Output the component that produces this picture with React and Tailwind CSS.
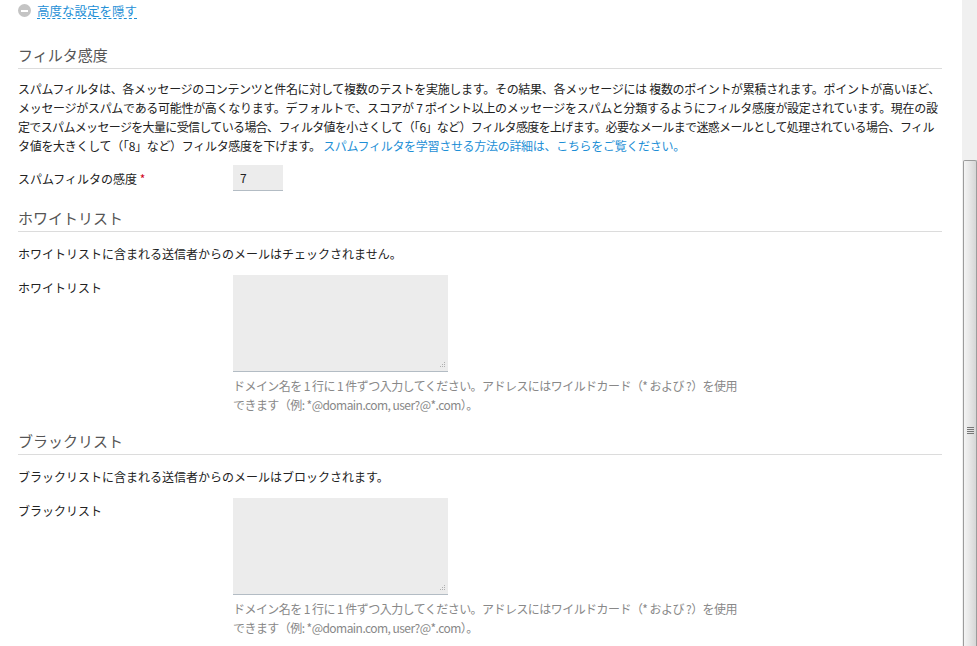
import React from "react";

const font = "font-['Meiryo','Noto_Sans_CJK_JP',sans-serif]";

function SectionHeading({ children, className = "" }) {
  return (
    <h3
      className={`text-[15px] leading-[20px] text-[#555] pb-[3px] border-b border-[#dcdcdc] ${className}`}
    >
      {children}
    </h3>
  );
}

function ListField({ label }) {
  return (
    <>
      <div className="mt-[12px] flex">
        <label className="w-[215px] shrink-0 pt-[3px] text-[12px] leading-[19px] text-[#222]">
          {label}
        </label>
        <div>
          <div className="relative w-[215px] h-[97px]">
            <textarea
              readOnly
              className="block w-full h-full resize-none bg-[#ececec] border-0 border-b border-[#b3bcc4] outline-none"
            />
            <svg
              className="absolute right-[2px] bottom-[3px]"
              width="7"
              height="7"
              viewBox="0 0 7 7"
            >
              <rect x="5" y="0" width="1" height="1" fill="#b0b0b0" />
              <rect x="3" y="2" width="1" height="1" fill="#b0b0b0" />
              <rect x="5" y="2" width="1" height="1" fill="#b0b0b0" />
              <rect x="1" y="4" width="1" height="1" fill="#b0b0b0" />
              <rect x="3" y="4" width="1" height="1" fill="#b0b0b0" />
              <rect x="5" y="4" width="1" height="1" fill="#b0b0b0" />
            </svg>
          </div>
          <p className="mt-[4px] text-[12px] leading-[19px] tracking-[-0.55px] text-[#888] whitespace-nowrap">
            ドメイン名を 1 行に 1 件ずつ入力してください。アドレスにはワイルドカード（* および ?）を使用
            <br />
            できます（例: *@domain.com, user?@*.com）。
          </p>
        </div>
      </div>
    </>
  );
}

function Scrollbar() {
  return (
    <div className="w-[15px] shrink-0 flex flex-col bg-[#f0f0f0]">
      <div className="h-[160px]" />
      <div className="flex-1 ml-px border border-b-0 border-[#9c9c9c] rounded-t-[2px] bg-gradient-to-r from-[#f4f4f4] via-[#e6e6e6] to-[#d6d6d6] flex flex-col items-center">
        <div className="mt-[266px] flex flex-col gap-[1px]">
          <div className="w-[7px] h-px bg-[#777]" />
          <div className="w-[7px] h-px bg-[#777]" />
          <div className="w-[7px] h-px bg-[#777]" />
          <div className="w-[7px] h-px bg-[#777]" />
        </div>
      </div>
    </div>
  );
}

export default function App() {
  return (
    <div className={`h-[646px] w-[977px] overflow-hidden flex bg-white ${font}`}>
      <div className="w-[962px] shrink-0 pl-[18px] pr-[20px]">
        {/* advanced toggle */}
        <div className="mt-[4px] flex items-start gap-[6px]">
          <span className="w-[13px] h-[13px] rounded-full bg-[#c4c4c4] flex items-center justify-center">
            <span className="w-[7px] h-[2px] bg-white" />
          </span>
          <a
            href="#"
            className="text-[12.5px] leading-[14px] text-[#1e8fd6] border-b border-dashed border-[#1e8fd6]"
          >
            高度な設定を隠す
          </a>
        </div>

        <SectionHeading className="mt-[26px]">フィルタ感度</SectionHeading>
        <p className="mt-[10px] text-[12px] leading-[19px] tracking-[-0.3px] text-[#222] whitespace-nowrap">
          スパムフィルタは、各メッセージのコンテンツと件名に対して複数のテストを実施します。その結果、各メッセージには 複数のポイントが累積されます。ポイントが高いほど、
          <br />
          メッセージがスパムである可能性が高くなります。デフォルトで、スコアが 7 ポイント以上のメッセージをスパムと分類するようにフィルタ感度が設定されています。現在の設
          <br />
          <span className="tracking-[-0.65px]">
            定でスパムメッセージを大量に受信している場合、フィルタ値を小さくして（「6」など）フィルタ感度を上げます。必要なメールまで迷惑メールとして処理されている場合、フィル
          </span>
          <br />
          タ値を大きくして（「8」など）フィルタ感度を下げます。{" "}
          <a href="#" className="text-[#1e8fd6]">
            スパムフィルタを学習させる方法の詳細は、こちらをご覧ください。
          </a>
        </p>

        <div className="mt-[10px] flex items-center">
          <label className="w-[215px] shrink-0 text-[12px] leading-[19px] text-[#222]">
            スパムフィルタの感度 <span className="text-[#d0021b]">*</span>
          </label>
          <input
            readOnly
            value="7"
            className="w-[50px] h-[26px] px-[7px] text-[12px] text-[#222] bg-[#ececec] border-0 border-b border-[#b3bcc4] outline-none"
          />
        </div>

        <SectionHeading className="mt-[17px]">ホワイトリスト</SectionHeading>
        <p className="mt-[12px] text-[12px] leading-[19px] text-[#222]">
          ホワイトリストに含まれる送信者からのメールはチェックされません。
        </p>
        <ListField label="ホワイトリスト" />

        <SectionHeading className="mt-[17px]">ブラックリスト</SectionHeading>
        <p className="mt-[12px] text-[12px] leading-[19px] text-[#222]">
          ブラックリストに含まれる送信者からのメールはブロックされます。
        </p>
        <ListField label="ブラックリスト" />
      </div>
      <Scrollbar />
    </div>
  );
}
